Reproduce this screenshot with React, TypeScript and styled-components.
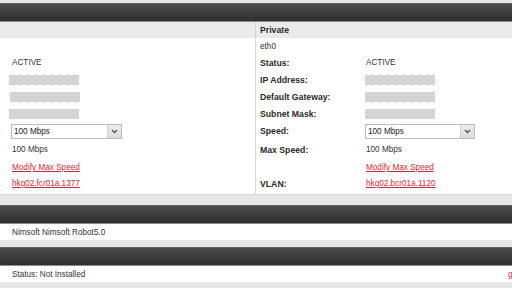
import React from "react";
import styled, { createGlobalStyle } from "styled-components";

const Global = createGlobalStyle`
  html, body { margin: 0; padding: 0; }
  body {
    width: 512px;
    height: 288px;
    overflow: hidden;
    background: #e7e7e7;
    font-family: "Liberation Sans", Arial, sans-serif;
    color: #333;
  }
`;

const Page = styled.div`
  height: 288px;
  overflow: hidden;
  padding-top: 3px;
  box-sizing: border-box;
  background: #e7e7e7;
`;

const DarkBar = styled.div`
  height: 19px;
  box-sizing: border-box;
  background: linear-gradient(#4c4c4c, #2f2f2f);
  border-top: 1px solid #606060;
  border-bottom: 1px solid #8c8c8c;
`;

const Panels = styled.div`
  display: grid;
  grid-template-columns: 256px 256px;
`;

const Column = styled.div<{ $divider?: boolean }>`
  display: flex;
  flex-direction: column;
  border-right: ${(p) => (p.$divider ? "1px solid #d6d6d6" : "none")};
`;

const ColHeader = styled.div<{ $pad: number }>`
  height: 16px;
  line-height: 16px;
  padding-left: ${(p) => p.$pad}px;
  background: #eaeaea;
  font-size: 8.7px;
  font-weight: bold;
  color: #2a2a2a;
`;

const Body = styled.div<{ $pad: number }>`
  background: #fff;
  height: 156px;
  padding-left: ${(p) => p.$pad}px;
  border-bottom: 1px solid #d8d8d8;
  display: flex;
  flex-direction: column;
`;

const Row = styled.div<{ $h: number; $label: number }>`
  height: ${(p) => p.$h}px;
  display: grid;
  grid-template-columns: ${(p) => p.$label}px 1fr;
  align-items: center;
  font-size: 8.2px;
`;

const Label = styled.span`
  font-weight: bold;
  font-size: 8.7px;
  color: #2a2a2a;
`;

const Value = styled.span`
  color: #333;
  white-space: nowrap;
`;

const Redacted = styled.div<{ $shift: number }>`
  width: 70px;
  height: 10px;
  margin-left: ${(p) => p.$shift}px;
  background: repeating-conic-gradient(#c6c6c6 0 25%, #e2e2e2 0 50%) 0 0 / 2px 2px;
`;

const SelectBox = styled.div<{ $shift: number; $w: number }>`
  width: ${(p) => p.$w}px;
  height: 15px;
  margin-left: ${(p) => p.$shift}px;
  box-sizing: border-box;
  border: 1px solid #bdbdbd;
  background: #fff;
  display: flex;
  align-items: stretch;
  font-size: 8.2px;
  color: #222;
`;

const SelectText = styled.span`
  flex: 1;
  display: flex;
  align-items: center;
  padding-left: 2px;
`;

const Arrow = styled.span`
  width: 13px;
  display: flex;
  align-items: center;
  justify-content: center;
  background: linear-gradient(#ededed, #dcdcdc);
  border-left: 1px solid #cfcfcf;
`;

const Link = styled.a`
  color: #cc2a3c;
  text-decoration: underline;
  white-space: nowrap;
  cursor: pointer;
`;

const InfoRow = styled.div`
  height: 16px;
  background: #fff;
  display: flex;
  align-items: center;
  padding-left: 12px;
  font-size: 8.2px;
  color: #333;
`;

const Section = styled.div<{ $gap: number }>`
  margin-top: ${(p) => p.$gap}px;
`;

const Spacer = styled.span`
  flex: 1;
`;

const EdgeLink = styled.span`
  flex: 0 0 4px;
  min-width: 0;
  white-space: nowrap;
  overflow: visible;
`;

const Chevron = () => (
  <svg width="7" height="5" viewBox="0 0 7 5">
    <path d="M1 1 L3.5 3.5 L6 1" fill="none" stroke="#555" strokeWidth="1.4" />
  </svg>
);

const FakeSelect = ({ shift, w }: { shift: number; w: number }) => (
  <SelectBox $shift={shift} $w={w}>
    <SelectText>100 Mbps</SelectText>
    <Arrow>
      <Chevron />
    </Arrow>
  </SelectBox>
);

const heights = [16, 17, 17, 17, 17, 18, 19, 17, 15];

export default function App() {
  return (
    <>
      <Global />
      <Page>
        <DarkBar />
        <Panels>
          <Column $divider>
            <ColHeader $pad={12} />
            <Body $pad={12}>
              <Row $h={heights[0]} $label={0}><span /><span /></Row>
              <Row $h={heights[1]} $label={0}><span /><Value>ACTIVE</Value></Row>
              <Row $h={heights[2]} $label={0}><span /><Redacted $shift={-3} /></Row>
              <Row $h={heights[3]} $label={0}><span /><Redacted $shift={-2} /></Row>
              <Row $h={heights[4]} $label={0}><span /><Redacted $shift={-3} /></Row>
              <Row $h={heights[5]} $label={0}><span /><FakeSelect shift={-1} w={111} /></Row>
              <Row $h={heights[6]} $label={0}><span /><Value>100 Mbps</Value></Row>
              <Row $h={heights[7]} $label={0}><span /><Value><Link>Modify Max Speed</Link></Value></Row>
              <Row $h={heights[8]} $label={0}><span /><Value><Link>hkg02.fcr01a.1377</Link></Value></Row>
            </Body>
          </Column>
          <Column>
            <ColHeader $pad={4}>Private</ColHeader>
            <Body $pad={4}>
              <Row $h={heights[0]} $label={106}><Value>eth0</Value><span /></Row>
              <Row $h={heights[1]} $label={106}><Label>Status:</Label><Value>ACTIVE</Value></Row>
              <Row $h={heights[2]} $label={106}><Label>IP Address:</Label><Redacted $shift={-1} /></Row>
              <Row $h={heights[3]} $label={106}><Label>Default Gateway:</Label><Redacted $shift={-1} /></Row>
              <Row $h={heights[4]} $label={106}><Label>Subnet Mask:</Label><Redacted $shift={-1} /></Row>
              <Row $h={heights[5]} $label={106}><Label>Speed:</Label><FakeSelect shift={-1} w={110} /></Row>
              <Row $h={heights[6]} $label={106}><Label>Max Speed:</Label><Value>100 Mbps</Value></Row>
              <Row $h={heights[7]} $label={106}><span /><Value><Link>Modify Max Speed</Link></Value></Row>
              <Row $h={heights[8]} $label={106}><Label>VLAN:</Label><Value><Link>hkg02.bcr01a.1120</Link></Value></Row>
            </Body>
          </Column>
        </Panels>
        <Section $gap={10}>
          <DarkBar />
          <InfoRow>Nimsoft Nimsoft Robot5.0</InfoRow>
        </Section>
        <Section $gap={7}>
          <DarkBar />
          <InfoRow>
            Status: Not Installed
            <Spacer />
            <EdgeLink><Link>get</Link></EdgeLink>
          </InfoRow>
        </Section>
      </Page>
    </>
  );
}
